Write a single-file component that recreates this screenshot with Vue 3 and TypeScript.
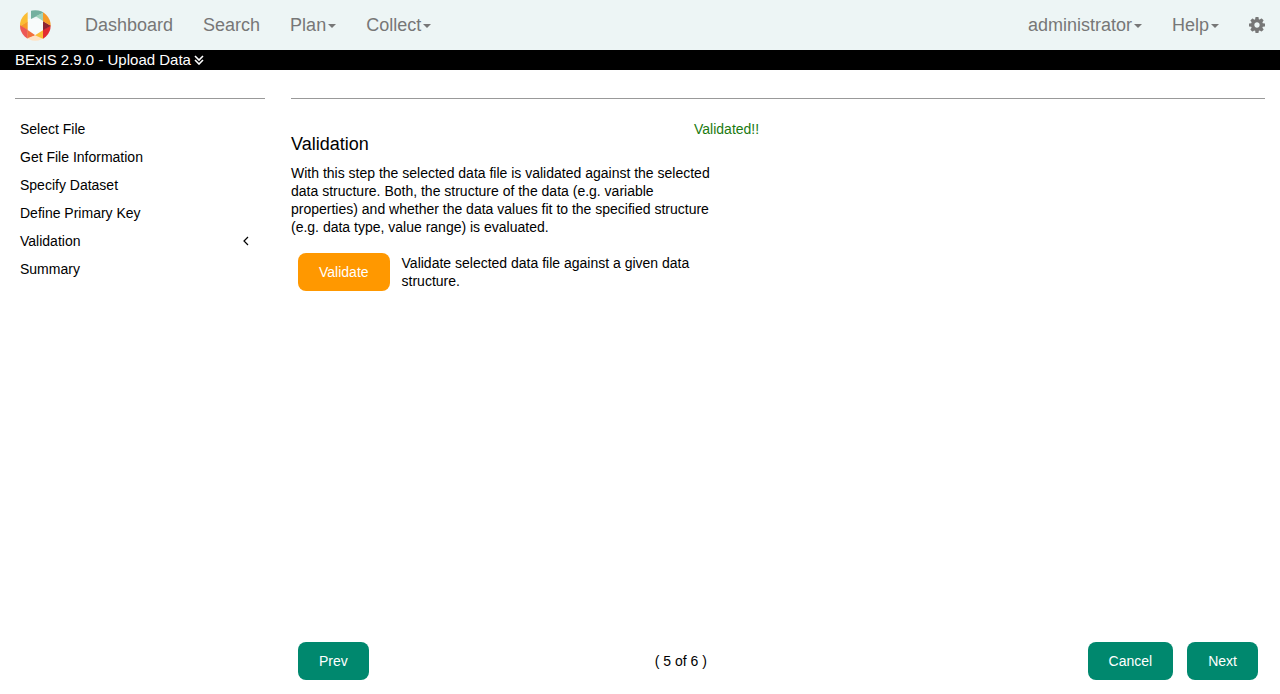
<script setup lang="ts">
import { ref } from 'vue'

interface NavItem {
  label: string
  menu: boolean
}

const leftNav: NavItem[] = [
  { label: 'Dashboard', menu: false },
  { label: 'Search', menu: false },
  { label: 'Plan', menu: true },
  { label: 'Collect', menu: true },
]

const rightNav: NavItem[] = [
  { label: 'administrator', menu: true },
  { label: 'Help', menu: true },
]

const steps: string[] = [
  'Select File',
  'Get File Information',
  'Specify Dataset',
  'Define Primary Key',
  'Validation',
  'Summary',
]

const current = ref(4)
const validated = ref(true)

function go(delta: number): void {
  current.value = Math.min(steps.length - 1, Math.max(0, current.value + delta))
}
</script>

<template>
  <div class="page">
    <header class="navbar">
      <a href="#" class="brand" aria-label="Home">
        <svg class="logo" viewBox="0 0 93 93" aria-hidden="true">
          <defs>
            <clipPath id="ring"><circle cx="46" cy="46.5" r="46" /></clipPath>
          </defs>
          <g clip-path="url(#ring)">
            <path fill="#f8fbfb" d="M22 26H70V62L46 76L22 62Z" />
            <path fill="#fbbd34" d="M0 48V0H23V37Z" />
            <path fill="#f79a28" d="M0 48L23 35V60Z" />
            <path fill="#ec5856" d="M0 46L23 59V93H0Z" />
            <path fill="#f26f3c" d="M22 59L46 76L22 87Z" />
            <path fill="#ffe2c3" d="M18 86L46 76L73 86V93H18Z" />
            <path fill="#fbbd34" d="M45 76L70 60V87Z" />
            <path fill="#e32b31" d="M69 87V59L93 46V93H69Z" />
            <path fill="#8e2434" d="M69 33L93 47L69 61Z" />
            <path fill="#f79a28" d="M69 0H93V48L69 34Z" />
            <path fill="#74b09f" d="M33 0H69V9L33 27Z" />
            <path fill="#9fd3bb" d="M47 19L69 8V33Z" />
          </g>
        </svg>
      </a>
      <nav class="nav" aria-label="Main">
        <a v-for="item in leftNav" :key="item.label" href="#" class="nav-link">
          {{ item.label }}<span v-if="item.menu" class="caret"></span>
        </a>
      </nav>
      <nav class="nav nav-right" aria-label="Account">
        <a v-for="item in rightNav" :key="item.label" href="#" class="nav-link">
          {{ item.label }}<span v-if="item.menu" class="caret"></span>
        </a>
        <a href="#" class="nav-link" aria-label="Settings">
          <svg class="gear" viewBox="0 0 1536 1536" aria-hidden="true">
            <path
              fill="currentColor"
              fill-rule="evenodd"
              d="M1024 768q0-106-75-181t-181-75-181 75-75 181 75 181 181 75 181-75 75-181zm512-109v222q0 12-8 23t-20 13l-185 28q-19 54-39 91 35 50 107 138 10 12 10 25t-9 23q-27 37-99 108t-94 71q-12 0-26-9l-138-108q-44 23-91 38-16 136-29 186-7 28-36 28H657q-14 0-24.500-8.500T621 1506l-28-184q-49-16-90-37l-141 107q-10 9-25 9-14 0-25-11-126-114-165-168-7-10-7-23 0-12 8-23 15-21 51-66.500t54-70.500q-27-50-41-99L29 913q-13-2-21-12.500T0 877V655q0-12 8-23t19-13l186-28q14-46 39-92-40-57-107-138-10-12-10-24 0-10 9-23 26-36 98.500-107.500T337 135q13 0 26 10l138 107q44-23 91-38 16-136 29-186 7-28 36-28h222q14 0 24.500 8.500T915 30l28 184q49 16 90 37l142-107q9-9 24-9 13 0 25 10 129 119 165 170 7 8 7 22 0 12-8 23-15 21-51 66.500t-54 70.500q26 50 41 98l183 28q13 2 21 12.500t8 23.500z"
            />
          </svg>
        </a>
      </nav>
    </header>

    <div class="titlebar">
      <span>BExIS 2.9.0 - Upload Data</span>
      <svg class="chevrons" viewBox="0 0 10 10" aria-hidden="true">
        <path d="M1 1L5 5L9 1M1 5L5 9L9 5" fill="none" stroke="currentColor" stroke-width="1.6" />
      </svg>
    </div>

    <div class="content">
      <aside class="sidebar">
        <ol class="steps">
          <li v-for="(step, i) in steps" :key="step" class="step">
            <a href="#" @click.prevent="current = i">{{ step }}</a>
            <svg v-if="i === current" class="marker" viewBox="0 0 6 10" aria-hidden="true">
              <path d="M5 1L1 5L5 9" fill="none" stroke="currentColor" stroke-width="1.2" />
            </svg>
          </li>
        </ol>
      </aside>

      <main class="main">
        <div class="heading">
          <h1>Validation</h1>
          <p v-if="validated" class="status">Validated!!</p>
        </div>
        <p class="description">
          With this step the selected data file is validated against the selected data structure.
          Both, the structure of the data (e.g. variable properties) and whether the data values fit
          to the specified structure (e.g. data type, value range) is evaluated.
        </p>
        <div class="action">
          <button type="button" class="btn btn-orange" @click="validated = true">Validate</button>
          <p class="hint">Validate selected data file against a given data structure.</p>
        </div>

        <footer class="footer">
          <div><button type="button" class="btn" @click="go(-1)">Prev</button></div>
          <span>( {{ current + 1 }} of {{ steps.length }} )</span>
          <div class="footer-end">
            <button type="button" class="btn">Cancel</button>
            <button type="button" class="btn" @click="go(1)">Next</button>
          </div>
        </footer>
      </main>
    </div>
  </div>
</template>

<style>
body {
  margin: 0;
  background: #fff;
}
</style>

<style scoped>
.page {
  box-sizing: border-box;
  display: flex;
  flex-direction: column;
  min-height: 100vh;
  font: 14px/18px "Liberation Sans", Arial, sans-serif;
  color: #000;
}

a {
  color: inherit;
  text-decoration: none;
}

p,
h1 {
  margin: 0;
}

.navbar {
  display: flex;
  align-items: center;
  height: 50px;
  background: #edf5f5;
  color: #777;
  font-size: 18px;
  line-height: 20px;
}

.brand {
  display: flex;
  padding: 0 19px 0 20px;
}

.logo {
  width: 31px;
  height: 31px;
}

.nav {
  display: flex;
}

.nav-right {
  margin-left: auto;
}

.nav-link {
  display: flex;
  align-items: center;
  padding: 15px;
}

.caret {
  margin: 2px 0 0 2px;
  border-top: 4px solid currentColor;
  border-right: 4px solid transparent;
  border-left: 4px solid transparent;
}

.gear {
  width: 16px;
  height: 16px;
}

.titlebar {
  display: flex;
  align-items: center;
  gap: 3px;
  height: 20px;
  padding: 0 15px;
  background: #000;
  color: #fff;
  font-size: 15px;
}

.chevrons {
  width: 10px;
  height: 10px;
}

.content {
  flex: 1;
  display: grid;
  grid-template-columns: 250px 1fr;
  gap: 26px;
  padding: 28px 15px 14px;
}

.sidebar,
.main {
  border-top: 1px solid #999;
  padding-top: 16px;
}

.steps {
  margin: 0;
  padding: 0 16px 0 5px;
  list-style: none;
}

.step {
  display: flex;
  align-items: center;
  justify-content: space-between;
  height: 28px;
}

.marker {
  width: 6px;
  height: 10px;
}

.main {
  display: flex;
  flex-direction: column;
}

.heading {
  display: grid;
  grid-template-columns: 403px 1fr;
  padding-top: 5px;
}

h1 {
  padding-top: 14px;
  font-size: 18px;
  font-weight: 400;
  line-height: 20px;
}

.status {
  color: #1b7a10;
}

.description {
  max-width: 432px;
  padding-top: 10px;
}

.action {
  display: flex;
  align-items: center;
  gap: 12px;
  padding: 17px 7px 0;
}

.hint {
  max-width: 320px;
}

.btn {
  min-width: 70px;
  height: 38px;
  padding: 0 21px;
  border: 0;
  border-radius: 8px;
  background: #00886e;
  color: #fff;
  font: inherit;
  cursor: pointer;
}

.btn-orange {
  background: #ff9800;
}

.footer {
  display: grid;
  grid-template-columns: 11fr auto 17fr;
  align-items: center;
  margin-top: auto;
  padding: 24px 7px 0;
}

.footer-end {
  display: flex;
  justify-content: flex-end;
  gap: 14px;
}
</style>
